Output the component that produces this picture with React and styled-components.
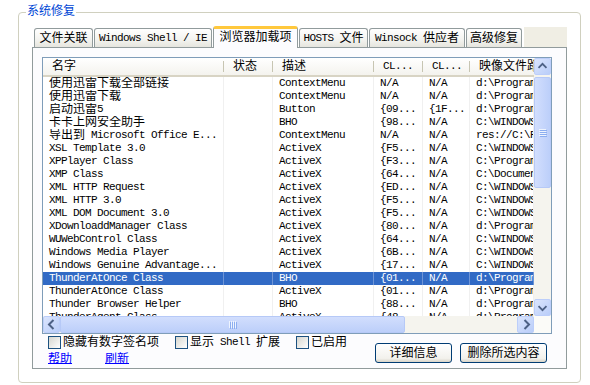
import React from 'react';
import styled, { createGlobalStyle } from 'styled-components';

const Global = createGlobalStyle`
  html, body { margin: 0; padding: 0; background: #ffffff; }
  body {
    font-family: "Liberation Mono", "Noto Sans CJK SC", monospace;
    font-size: 11px;
    letter-spacing: -0.6px;
    color: #000;
  }
`;

const Han = styled.span`
  font-family: "Noto Sans CJK SC", sans-serif;
  font-size: 12px;
  letter-spacing: 0;
  line-height: 12px;
  vertical-align: top;
  position: relative;
  top: -1px;
`;

const cjkRe = /([\u2E80-\u9FFF\uFF00-\uFFEF]+)/;
function T({ children }) {
  const parts = String(children).split(cjkRe);
  return <span>{parts.map((p, i) => (i % 2 ? <Han key={i}>{p}</Han> : p))}</span>;
}

const Page = styled.div`
  width: 590px;
  height: 385px;
  box-sizing: border-box;
  padding: 5px 0 0 18px;
  overflow: hidden;
`;

const Group = styled.fieldset`
  margin: 0;
  width: 563px;
  height: 378px;
  box-sizing: border-box;
  border: 1px solid #d0d0bf;
  border-radius: 4px;
  padding: 7px 13px 0 13px;
`;

const Legend = styled.legend`
  margin-left: -6px;
  padding: 0 1px;
  line-height: 14px;
  height: 14px;
  color: #0046d5;
`;

const TabControl = styled.div`
  width: 535px;
  display: flex;
  flex-direction: column;
`;

const TabStrip = styled.div`
  display: flex;
  align-items: flex-end;
  height: 21px;
  padding-left: 2px;
  gap: 1px;
  position: relative;
  z-index: 1;
`;

const Tab = styled.div`
  width: ${(p) => p.$w}px;
  height: ${(p) => (p.$active ? 22 : 19)}px;
  margin-bottom: ${(p) => (p.$active ? -1 : 0)}px;
  box-sizing: border-box;
  border: 1px solid #919b9c;
  border-bottom: none;
  border-top: ${(p) => (p.$active ? '3px solid #ffc83c' : '1px solid #919b9c')};
  border-radius: 3px 3px 0 0;
  background: ${(p) => (p.$active ? '#fcfcfe' : 'linear-gradient(#ffffff, #f3f3ef 60%, #e6e5de)')};
  display: flex;
  align-items: center;
  justify-content: center;
  line-height: 13px;
  white-space: nowrap;
  padding-bottom: ${(p) => (p.$active ? 2 : 0)}px;
`;

const StripFill = styled.div`
  flex: 1;
  align-self: stretch;
  margin-top: 1px;
  margin-left: 1px;
  background: #f0eee4;
`;

const Panel = styled.div`
  height: 322px;
  box-sizing: border-box;
  border: 1px solid #919b9c;
  background: #fcfcfe;
  padding: 9px 14px 0 9px;
  display: flex;
  flex-direction: column;
`;

const List = styled.div`
  height: 277px;
  box-sizing: border-box;
  border: 1px solid #7f9db9;
  background: #ffffff;
  display: flex;
  flex-direction: column;
`;

const ListMain = styled.div`
  flex: 1;
  display: flex;
  min-height: 0;
`;

const Table = styled.div`
  flex: 1;
  overflow: hidden;
  display: flex;
  flex-direction: column;
`;

const cols = '181px 49px 101px 49px 47px 1fr';

const HeaderRow = styled.div`
  display: grid;
  grid-template-columns: ${cols};
  height: 19px;
  flex: none;
  box-sizing: border-box;
  background: linear-gradient(#ffffff, #f4f3ee);
  border-bottom: 2px solid #d8d4c4;
`;

const HeadCell = styled.div`
  padding-left: 9px;
  line-height: 13px;
  padding-top: 2px;
  white-space: nowrap;
  overflow: hidden;
  position: relative;
  &::after {
    content: '';
    position: absolute;
    right: 0;
    top: 3px;
    bottom: 3px;
    width: 1px;
    background: #c7c5b2;
    box-shadow: 1px 0 0 #ffffff;
  }
`;

const Row = styled.div`
  display: grid;
  grid-template-columns: ${cols};
  grid-template-rows: 13px;
  height: 13px;
  flex: none;
  line-height: 13px;
  background: ${(p) => (p.$sel ? '#316ac5' : 'transparent')};
  color: ${(p) => (p.$sel ? '#ffffff' : '#000000')};
`;

const Cell = styled.div`
  padding-left: 6px;
  white-space: nowrap;
  overflow: hidden;
  border-right: 1px solid ${(p) => (p.$sel ? '#6f95d6' : '#f0f0f0')};
`;

const VScroll = styled.div`
  width: 17px;
  flex: none;
  display: flex;
  flex-direction: column;
  background: #f5f4ee;
`;

const ScrollBtn = styled.div`
  width: 17px;
  height: 17px;
  flex: none;
  box-sizing: border-box;
  border: 1px solid #bccefa;
  border-radius: 2px;
  background: linear-gradient(135deg, #dbe5fd, #b9cdf9);
  display: flex;
  align-items: center;
  justify-content: center;
`;

const VTrack = styled.div`
  flex: 1;
  padding-top: 2px;
  display: flex;
  flex-direction: column;
`;

const Thumb = styled.div`
  box-sizing: border-box;
  border: 1px solid #b6c9f7;
  border-radius: 2px;
  background: linear-gradient(${(p) => (p.$h ? '180deg' : '90deg')}, #d2defd, #bccffa);
  display: flex;
  align-items: center;
  justify-content: center;
  flex: none;
`;

const HBar = styled.div`
  height: 17px;
  flex: none;
  display: flex;
`;

const HScroll = styled.div`
  flex: 1;
  display: flex;
  background: #f5f4ee;
`;

const HTrack = styled.div`
  flex: 1;
  display: flex;
`;

const Corner = styled.div`
  width: 17px;
  background: #fbfbf8;
`;

const Bottom = styled.div`
  display: flex;
  justify-content: space-between;
  padding: 0 5px 0 6px;
`;

const LeftCol = styled.div`
  display: flex;
  flex-direction: column;
  padding-top: 1px;
`;

const CheckRow = styled.div`
  display: flex;
  gap: 16px;
  height: 15px;
  align-items: center;
  line-height: 13px;
`;

const CheckItem = styled.label`
  display: flex;
  align-items: center;
  gap: 2px;
  white-space: nowrap;
`;

const Box = styled.span`
  width: 13px;
  height: 13px;
  box-sizing: border-box;
  border: 1px solid #1c5180;
  background: linear-gradient(135deg, #d6d6cf, #ffffff);
`;

const LinkRow = styled.div`
  display: flex;
  gap: 33px;
  margin-top: 3px;
  line-height: 13px;
`;

const Link = styled.a`
  color: #0000ff;
  text-decoration: underline;
  cursor: pointer;
`;

const Buttons = styled.div`
  display: flex;
  gap: 8px;
  padding-top: 9px;
`;

const Button = styled.button`
  width: ${(p) => p.$w}px;
  height: 20px;
  padding: 0;
  border: 1px solid #003c74;
  border-radius: 3px;
  background: linear-gradient(#ffffff, #f2f1ec 80%, #d8d4c8);
  font: inherit;
  letter-spacing: 0;
  line-height: 13px;
  color: #000;
`;

const Arrow = ({ dir }) => {
  const paths = {
    up: 'M4 9 L8.5 4.5 L13 9',
    down: 'M4 6 L8.5 10.5 L13 6',
    left: 'M9.5 3 L5 7.5 L9.5 12',
    right: 'M6.5 3 L11 7.5 L6.5 12',
  };
  const h = dir === 'left' || dir === 'right';
  return (
    <svg width={h ? 15 : 17} height="15" viewBox={h ? '0 0 15 15' : '0 0 17 15'}>
      <path d={paths[dir]} fill="none" stroke="#4d6185" strokeWidth="2" />
    </svg>
  );
};

const Grip = ({ h }) =>
  h ? (
    <svg width="8" height="8" viewBox="0 0 8 8">
      {[0, 2, 4, 6].map((x) => (
        <g key={x}>
          <rect x={x} y="0" width="1" height="7" fill="#eef4fe" />
          <rect x={x + 1} y="1" width="1" height="7" fill="#8caef0" />
        </g>
      ))}
    </svg>
  ) : (
    <svg width="8" height="8" viewBox="0 0 8 8">
      {[0, 2, 4, 6].map((y) => (
        <g key={y}>
          <rect x="0" y={y} width="7" height="1" fill="#eef4fe" />
          <rect x="1" y={y + 1} width="7" height="1" fill="#8caef0" />
        </g>
      ))}
    </svg>
  );

const tabs = [
  ['文件关联', 59],
  ['Windows Shell / IE', 118],
  ['浏览器加载项', 85, true],
  ['HOSTS 文件', 69],
  ['Winsock 供应者', 96],
  ['高级修复', 56],
];

const headers = ['名字', '状态', '描述', 'CL...', 'CL...', '映像文件路径'];

const dp = 'd:\\Program Files\\Thunder';
const cw = 'C:\\WINDOWS\\system32';
const rows = [
  ['使用迅雷下载全部链接', '', 'ContextMenu', 'N/A', 'N/A', dp],
  ['使用迅雷下载', '', 'ContextMenu', 'N/A', 'N/A', dp],
  ['启动迅雷5', '', 'Button', '{09...', '{1F...', dp],
  ['卡卡上网安全助手', '', 'BHO', '{98...', 'N/A', cw],
  ['导出到 Microsoft Office E...', '', 'ContextMenu', 'N/A', 'N/A', 'res://C:\\PROGRA'],
  ['XSL Template 3.0', '', 'ActiveX', '{F5...', 'N/A', cw],
  ['XPPlayer Class', '', 'ActiveX', '{F3...', 'N/A', 'C:\\Program Files'],
  ['XMP Class', '', 'ActiveX', '{64...', 'N/A', 'C:\\Documents'],
  ['XML HTTP Request', '', 'ActiveX', '{ED...', 'N/A', cw],
  ['XML HTTP 3.0', '', 'ActiveX', '{F5...', 'N/A', cw],
  ['XML DOM Document 3.0', '', 'ActiveX', '{F5...', 'N/A', cw],
  ['XDownloaddManager Class', '', 'ActiveX', '{80...', 'N/A', dp],
  ['WUWebControl Class', '', 'ActiveX', '{64...', 'N/A', cw],
  ['Windows Media Player', '', 'ActiveX', '{6B...', 'N/A', cw],
  ['Windows Genuine Advantage...', '', 'ActiveX', '{17...', 'N/A', cw],
  ['ThunderAtOnce Class', '', 'BHO', '{01...', 'N/A', dp, true],
  ['ThunderAtOnce Class', '', 'ActiveX', '{01...', 'N/A', dp],
  ['Thunder Browser Helper', '', 'BHO', '{88...', 'N/A', dp],
  ['ThunderAgent Class', '', 'ActiveX', '{48...', 'N/A', dp],
];

export default function App() {
  return (
    <Page>
      <Global />
      <Group>
        <Legend>
          <T>系统修复</T>
        </Legend>
        <TabControl>
          <TabStrip>
            {tabs.map(([label, w, active]) => (
              <Tab key={label} $w={w} $active={active}>
                <T>{label}</T>
              </Tab>
            ))}
            <StripFill />
          </TabStrip>
          <Panel>
            <List>
              <ListMain>
                <Table>
                  <HeaderRow>
                    {headers.map((h, i) => (
                      <HeadCell key={i}>
                        <T>{h}</T>
                      </HeadCell>
                    ))}
                  </HeaderRow>
                  {rows.map((r, i) => (
                    <Row key={i} $sel={r[6]}>
                      {r.slice(0, 6).map((c, j) => (
                        <Cell key={j} $sel={r[6]}>
                          <T>{c}</T>
                        </Cell>
                      ))}
                    </Row>
                  ))}
                </Table>
                <VScroll>
                  <ScrollBtn>
                    <Arrow dir="up" />
                  </ScrollBtn>
                  <VTrack>
                    <Thumb style={{ height: 111 }}>
                      <Grip />
                    </Thumb>
                  </VTrack>
                  <ScrollBtn>
                    <Arrow dir="down" />
                  </ScrollBtn>
                </VScroll>
              </ListMain>
              <HBar>
                <HScroll>
                  <ScrollBtn>
                    <Arrow dir="left" />
                  </ScrollBtn>
                  <HTrack>
                    <Thumb $h style={{ width: 345 }}>
                      <Grip h />
                    </Thumb>
                  </HTrack>
                  <ScrollBtn>
                    <Arrow dir="right" />
                  </ScrollBtn>
                </HScroll>
                <Corner />
              </HBar>
            </List>
            <Bottom>
              <LeftCol>
                <CheckRow>
                  <CheckItem>
                    <Box />
                    <T>隐藏有数字签名项</T>
                  </CheckItem>
                  <CheckItem>
                    <Box />
                    <T>显示 Shell 扩展</T>
                  </CheckItem>
                  <CheckItem>
                    <Box />
                    <T>已启用</T>
                  </CheckItem>
                </CheckRow>
                <LinkRow>
                  <Link>
                    <T>帮助</T>
                  </Link>
                  <Link>
                    <T>刷新</T>
                  </Link>
                </LinkRow>
              </LeftCol>
              <Buttons>
                <Button $w={77}>
                  <T>详细信息</T>
                </Button>
                <Button $w={87}>
                  <T>删除所选内容</T>
                </Button>
              </Buttons>
            </Bottom>
          </Panel>
        </TabControl>
      </Group>
    </Page>
  );
}
